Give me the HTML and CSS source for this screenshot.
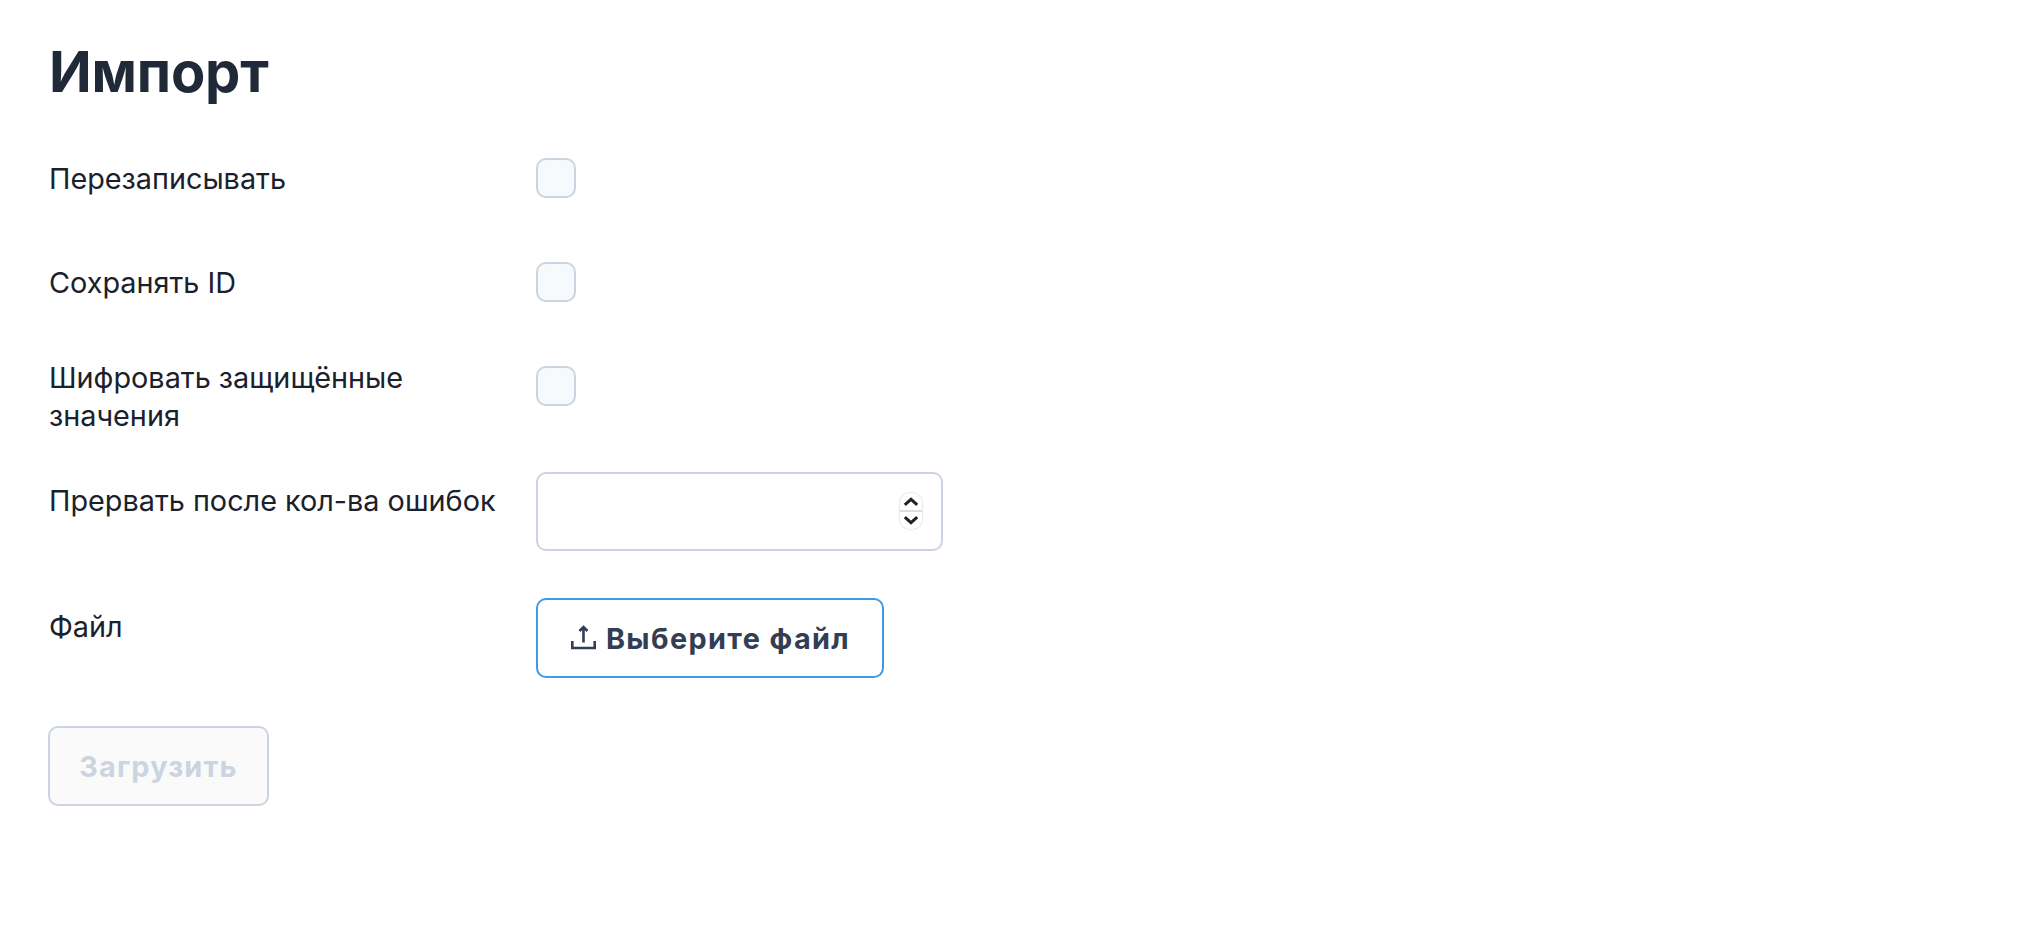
FILE: index.html
```html
<!DOCTYPE html>
<html lang="ru">
<head>
<meta charset="utf-8">
<title>Импорт</title>
<link rel="stylesheet" href="styles.css">
</head>
<body>
<main class="page">
  <h1 class="title">Импорт</h1>
  <form class="form">
    <div class="row row-check">
      <label class="label">Перезаписывать</label>
      <span class="check"></span>
    </div>
    <div class="row row-check">
      <label class="label">Сохранять ID</label>
      <span class="check"></span>
    </div>
    <div class="row row-multi">
      <label class="label">Шифровать защищённые значения</label>
      <span class="check"></span>
    </div>
    <div class="row row-number">
      <label class="label">Прервать после кол-ва ошибок</label>
      <div class="number">
        <input class="number-input" type="text">
        <span class="spinner">
          <svg class="spin-part" viewBox="0 0 22 17"><path d="M4.800 11.800L11 6.300l6.200 5.500" fill="none" stroke="#222" stroke-width="3"/></svg>
          <svg class="spin-part" viewBox="0 0 22 17"><path d="M4.800 5.200L11 10.700l6.200-5.500" fill="none" stroke="#222" stroke-width="3"/></svg>
        </span>
      </div>
    </div>
    <div class="row row-file">
      <label class="label">Файл</label>
      <button class="file-btn" type="button">
        <svg class="upload" viewBox="0 0 27 25"><path d="M13.500 2v15.500M9.500 6l4-4 4 4M2.300 16v7h22.400v-7" fill="none" stroke="#323e54" stroke-width="2.600"/></svg>
        Выберите файл
      </button>
    </div>
    <button class="submit" type="button" disabled>Загрузить</button>
  </form>
</main>
</body>
</html>
```
FILE: styles.css
```css
* { box-sizing: border-box; }
html, body { margin: 0; background: #fff; }
body { font-family: Inter, sans-serif; color: #1a202c; }
.page { padding: 36px 48px 0; }
.title {
  margin: 0 0 40px;
  padding-left: 1px;
  font-size: 56px;
  line-height: 72px;
  font-weight: 700;
  letter-spacing: -0.200px;
  color: #1f2937;
}
.form { display: flex; flex-direction: column; }
.row { display: grid; grid-template-columns: 488px 1fr; align-items: start; }
.row-check { height: 64px; margin-bottom: 40px; }
.row-multi { height: 79px; margin-bottom: 37px; }
.row-number { margin-bottom: 47px; }
.row-file { margin-bottom: 48px; }
.label { display: block; padding-left: 1px; font-size: 28.8px; line-height: 38px; width: 460px; }
.row-check .label { padding-top: 12px; }
.row-multi .label { padding-top: 3px; }
.row-number .label { padding-top: 10px; }
.row-file .label { padding-top: 10px; }
.check {
  display: block;
  width: 40px;
  height: 40px;
  margin-top: 10px;
  background: #f7fafc;
  border: 2px solid #cbd5e0;
  border-radius: 10px;
}
.number { position: relative; width: 407px; height: 79px; }
.number-input {
  display: block;
  width: 100%;
  height: 100%;
  border: 2px solid #cbd5e0;
  border-radius: 10px;
  background: #fff;
  outline: none;
}
.spinner {
  position: absolute;
  top: 21px;
  right: 21px;
  width: 22px;
  height: 36px;
  display: flex;
  flex-direction: column;
  justify-content: space-between;
  background: linear-gradient(#fff 47%, #ddd 47%, #ddd 53%, #fff 53%);
  border-radius: 10px;
  box-shadow: 0 0 2px rgba(0,0,0,.3);
}
.spin-part { display: block; width: 22px; height: 17px; }
.file-btn {
  display: flex;
  align-items: center;
  justify-content: center;
  gap: 9px;
  width: 348px;
  height: 80px;
  padding: 0;
  background: #fff;
  border: 2px solid #4299e1;
  border-radius: 10px;
  font: 700 28.8px Inter, sans-serif;
  letter-spacing: 1.400px;
  color: #323e54;
}
.upload { width: 27px; height: 25px; margin-top: -2px; }
.submit {
  width: 221px;
  height: 80px;
  padding: 0;
  background: #fafafa;
  border: 2px solid #cbd5e0;
  border-radius: 10px;
  font: 700 28.8px Inter, sans-serif;
  letter-spacing: 1.200px;
  color: #cbd5e0;
}
```
